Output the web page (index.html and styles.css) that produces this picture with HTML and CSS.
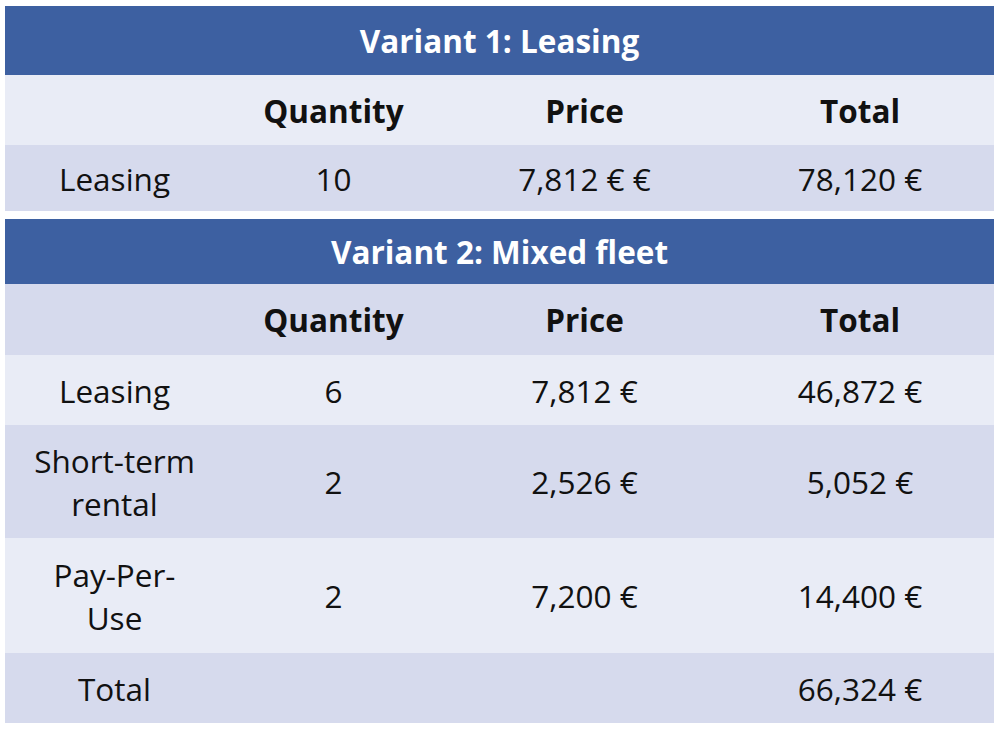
FILE: index.html
```html
<!DOCTYPE html>
<html>
<head>
<meta charset="utf-8">
<link rel="stylesheet" href="styles.css">
</head>
<body>
<div class="wrap">
  <table class="grid t1">
    <colgroup><col class="c1"><col class="c2"><col class="c3"><col class="c4"></colgroup>
    <tr class="title h69"><th colspan="4">Variant 1: Leasing</th></tr>
    <tr class="light head h70"><td></td><td>Quantity</td><td>Price</td><td>Total</td></tr>
    <tr class="dark h66"><td>Leasing</td><td>10</td><td>7,812 € €</td><td>78,120 €</td></tr>
  </table>
  <table class="grid t2">
    <colgroup><col class="c1"><col class="c2"><col class="c3"><col class="c4"></colgroup>
    <tr class="title h65"><th colspan="4">Variant 2: Mixed fleet</th></tr>
    <tr class="dark head h71"><td></td><td>Quantity</td><td>Price</td><td>Total</td></tr>
    <tr class="light h70"><td>Leasing</td><td>6</td><td>7,812 €</td><td>46,872 €</td></tr>
    <tr class="dark h113"><td>Short-term rental</td><td>2</td><td>2,526 €</td><td>5,052 €</td></tr>
    <tr class="light h115"><td>Pay-Per-Use</td><td>2</td><td>7,200 €</td><td>14,400 €</td></tr>
    <tr class="dark h70"><td>Total</td><td></td><td></td><td>66,324 €</td></tr>
  </table>
</div>
</body>
</html>
```
FILE: styles.css
```css
html, body { margin: 0; padding: 0; background: #ffffff; }
body { font-family: "Open Sans", "Noto Sans", sans-serif; color: #111111; }
.wrap { padding: 6px 0 0 5px; display: flex; flex-direction: column; gap: 8px; width: 989px; }
.grid { border-collapse: collapse; border-spacing: 0; width: 989px; table-layout: fixed; }
.c1 { width: 219px; }
.c2 { width: 219px; }
.c3 { width: 283px; }
.c4 { width: 268px; }
.grid td, .grid th { padding: 0 24px; text-align: center; vertical-align: middle; font-size: 31.5px; line-height: 43px; }
.title th { background: #3d60a1; color: #ffffff; font-weight: 700; }
.h65 { height: 65px; }
.h66 { height: 66px; }
.h69 { height: 69px; }
.h70 { height: 70px; }
.h71 { height: 71px; }
.h113 { height: 113px; }
.h115 { height: 115px; }
.head td { font-weight: 700; }
.light td { background: #e9ecf6; }
.dark td { background: #d6daed; }
```
